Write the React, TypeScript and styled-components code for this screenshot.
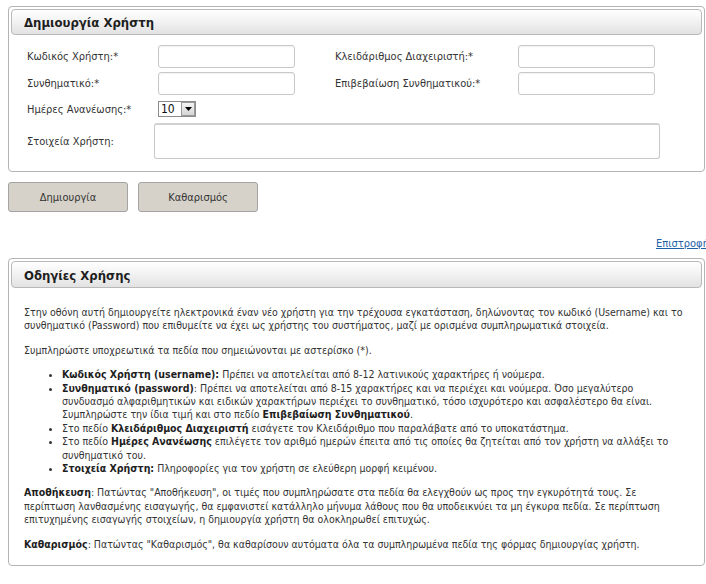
import styled, { createGlobalStyle } from 'styled-components';

const GlobalStyle = createGlobalStyle`
  html, body {
    margin: 0;
    padding: 0;
    background: #ffffff;
    overflow: hidden;
  }
  body {
    padding: 6px 0 0 8px;
    font-family: "DejaVu Sans Condensed", "DejaVu Sans", sans-serif;
    font-size: 11px;
    color: #333333;
  }
`;

const App = () => {
  return (
    <>
      <GlobalStyle />
      <Page>
        <Panel>
          <PanelHeader>
            <h2>Δημιουργία Χρήστη</h2>
          </PanelHeader>
          <Form>
            <Row>
              <Label>Κωδικός Χρήστη:*</Label>
              <Input type="text" />
              <Label $wide>Κλειδάριθμος Διαχειριστή:*</Label>
              <Input type="password" />
            </Row>
            <Row>
              <Label>Συνθηματικό:*</Label>
              <Input type="password" />
              <Label $wide>Επιβεβαίωση Συνθηματικού:*</Label>
              <Input type="password" />
            </Row>
            <Row $short>
              <Label>Ημέρες Ανανέωσης:*</Label>
              <SelectBox>
                <Select defaultValue="10">
                  <option value="10">10</option>
                  <option value="30">30</option>
                  <option value="60">60</option>
                  <option value="90">90</option>
                </Select>
                <SelectArrow>
                  <svg width="7" height="4" viewBox="0 0 7 4">
                    <path d="M0 0h7L3.5 4z" fill="#000" />
                  </svg>
                </SelectArrow>
              </SelectBox>
            </Row>
            <Row $tall>
              <Label>Στοιχεία Χρήστη:</Label>
              <TextArea />
            </Row>
          </Form>
        </Panel>

        <Buttons>
          <Button>Δημιουργία</Button>
          <Button>Καθαρισμός</Button>
        </Buttons>

        <BackRow>
          <BackLink href="#">Επιστροφή</BackLink>
        </BackRow>

        <Panel>
          <PanelHeader $tall>
            <h2>Οδηγίες Χρήσης</h2>
          </PanelHeader>
          <Help>
            <p>
              Στην οθόνη αυτή δημιουργείτε ηλεκτρονικά έναν νέο χρήστη για την τρέχουσα εγκατάσταση, δηλώνοντας τον
              κωδικό (Username) και το
              <br />
              συνθηματικό (Password) που επιθυμείτε να έχει ως χρήστης του συστήματος, μαζί με ορισμένα συμπληρωματικά
              στοιχεία.
            </p>
            <p>Συμπληρώστε υποχρεωτικά τα πεδία που σημειώνονται με αστερίσκο (*).</p>
            <ul>
              <li>
                <b>Κωδικός Χρήστη (username):</b> Πρέπει να αποτελείται από 8-12 λατινικούς χαρακτήρες ή νούμερα.
              </li>
              <li>
                <b>Συνθηματικό (password)</b>: Πρέπει να αποτελείται από 8-15 χαρακτήρες και να περιέχει και νούμερα.
                Όσο μεγαλύτερο
                <br />
                συνδυασμό αλφαριθμητικών και ειδικών χαρακτήρων περιέχει το συνθηματικό, τόσο ισχυρότερο και
                ασφαλέστερο θα είναι.
                <br />
                Συμπληρώστε την ίδια τιμή και στο πεδίο <b>Επιβεβαίωση Συνθηματικού</b>.
              </li>
              <li>
                Στο πεδίο <b>Κλειδάριθμος Διαχειριστή</b> εισάγετε τον Κλειδάριθμο που παραλάβατε από το υποκατάστημα.
              </li>
              <li>
                Στο πεδίο <b>Ημέρες Ανανέωσης</b> επιλέγετε τον αριθμό ημερών έπειτα από τις οποίες θα ζητείται από τον
                χρήστη να αλλάξει το
                <br />
                συνθηματικό του.
              </li>
              <li>
                <b>Στοιχεία Χρήστη:</b> Πληροφορίες για τον χρήστη σε ελεύθερη μορφή κειμένου.
              </li>
            </ul>
            <p>
              <b>Αποθήκευση</b>: Πατώντας "Αποθήκευση", οι τιμές που συμπληρώσατε στα πεδία θα ελεγχθούν ως προς την
              εγκυρότητά τους. Σε
              <br />
              περίπτωση λανθασμένης εισαγωγής, θα εμφανιστεί κατάλληλο μήνυμα λάθους που θα υποδεικνύει τα μη έγκυρα
              πεδία. Σε περίπτωση
              <br />
              επιτυχημένης εισαγωγής στοιχείων, η δημιουργία χρήστη θα ολοκληρωθεί επιτυχώς.
            </p>
            <p>
              <b>Καθαρισμός</b>: Πατώντας "Καθαρισμός", θα καθαρίσουν αυτόματα όλα τα συμπληρωμένα πεδία της φόρμας
              δημιουργίας χρήστη.
            </p>
          </Help>
        </Panel>
      </Page>
    </>
  );
};

export default App;

const Page = styled.div`
  width: 697px;
`;

const Panel = styled.section`
  box-sizing: border-box;
  width: 697px;
  padding: 2px;
  border: 1px solid #b4b4b4;
  border-radius: 4px;
  background: #ffffff;
`;

const PanelHeader = styled.div<{ $tall?: boolean }>`
  box-sizing: border-box;
  height: ${(p) => (p.$tall ? 27 : 26)}px;
  display: flex;
  align-items: center;
  padding: ${(p) => (p.$tall ? '2px' : '0')} 0 0 12px;
  border: 1px solid #b9b9b9;
  border-radius: 4px;
  background: linear-gradient(to bottom, #ffffff 0%, #f3f3f3 45%, #e2e2e2 100%);

  h2 {
    margin: 0;
    font-size: 13px;
    font-weight: bold;
    color: #1e1e1e;
    font-family: "DejaVu Sans Condensed", "DejaVu Sans", sans-serif;
  }
`;

const Form = styled.div`
  display: flex;
  flex-direction: column;
  gap: 4px;
  padding: 10px 0 10px 16px;
`;

const Row = styled.div<{ $short?: boolean; $tall?: boolean }>`
  display: flex;
  align-items: center;
  height: ${(p) => (p.$tall ? 36 : p.$short ? 16 : 23)}px;
  margin-top: ${(p) => (p.$tall ? 2 : p.$short ? 2 : 0)}px;
`;

const Label = styled.label<{ $wide?: boolean }>`
  flex: none;
  width: ${(p) => (p.$wide ? 183 : 131)}px;
  margin-left: ${(p) => (p.$wide ? 40 : 0)}px;
  color: #333333;
  white-space: nowrap;
`;

const Input = styled.input`
  box-sizing: border-box;
  width: 137px;
  height: 23px;
  border: 1px solid #c8c8c8;
  border-radius: 3px;
  box-shadow: inset 0 1px 2px rgba(0, 0, 0, 0.06);
  outline: none;
`;

const SelectBox = styled.span`
  position: relative;
  display: inline-block;
  width: 38px;
  height: 16px;
`;

const Select = styled.select`
  box-sizing: border-box;
  width: 38px;
  height: 16px;
  padding: 0 0 0 2px;
  appearance: none;
  border: 1px solid #8c8c8c;
  border-radius: 0;
  background: #ffffff;
  font-family: "DejaVu Sans Condensed", "DejaVu Sans", sans-serif;
  font-size: 12px;
  line-height: 14px;
  color: #111111;
  outline: none;
`;

const SelectArrow = styled.span`
  position: absolute;
  top: 1px;
  right: 1px;
  width: 14px;
  height: 14px;
  box-sizing: border-box;
  display: flex;
  align-items: center;
  justify-content: center;
  border: 1px solid #9a9a9a;
  background: linear-gradient(to bottom, #f4f4f4, #d4d4d4);
  pointer-events: none;
`;

const TextArea = styled.textarea`
  box-sizing: border-box;
  width: 506px;
  height: 36px;
  margin-left: -4px;
  border: 1px solid #c8c8c8;
  border-top: 2px solid #d0d0d0;
  border-radius: 3px;
  resize: none;
  outline: none;
`;

const Buttons = styled.div`
  display: flex;
  gap: 10px;
  margin-top: 10px;
`;

const Button = styled.button`
  width: 120px;
  height: 30px;
  border: 1px solid #a3a3a3;
  border-radius: 3px;
  background: #d6d2ca;
  color: #333333;
  font-family: "DejaVu Sans Condensed", "DejaVu Sans", sans-serif;
  font-size: 11px;
  cursor: pointer;
`;

const BackRow = styled.div`
  display: flex;
  height: 14px;
  padding-left: 648px;
  margin: 25px 0 7px 0;
  white-space: nowrap;
`;

const BackLink = styled.a`
  color: #1f5fa8;
  text-decoration: underline;
  font-size: 11px;
  line-height: 14px;
`;

const Help = styled.div`
  padding: 7px 12px 1px 13px;
  font-size: 10.5px;
  line-height: 13.4px;
  color: #333333;
  white-space: nowrap;

  p {
    margin: 11px 0;
  }

  ul {
    margin: 11px 0;
    padding-left: 38px;
  }

  b {
    color: #1e1e1e;
  }
`;
